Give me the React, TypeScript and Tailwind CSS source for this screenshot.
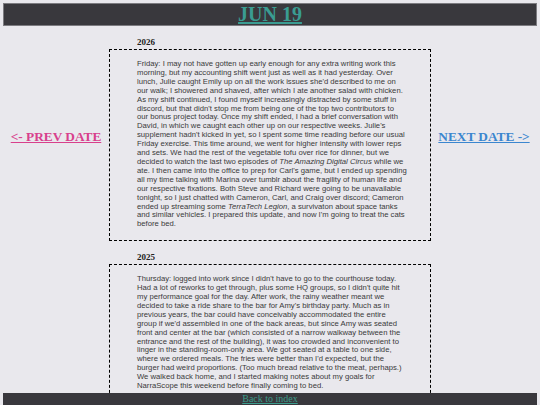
import React from "react";

type Entry = {
    year: string;
    body: React.ReactNode;
};

const entries: Entry[] = [
    {
        year: "2026",
        body: (
            <>
                Friday: I may not have gotten up early enough for any extra writing work this
                morning, but my accounting shift went just as well as it had yesterday. Over
                lunch, Julie caught Emily up on all the work issues she'd described to me on
                our walk; I showered and shaved, after which I ate another salad with chicken.
                As my shift continued, I found myself increasingly distracted by some stuff in
                discord, but that didn't stop me from being one of the top two contributors to
                our bonus project today. Once my shift ended, I had a brief conversation with
                David, in which we caught each other up on our respective weeks. Julie's
                supplement hadn't kicked in yet, so I spent some time reading before our usual
                Friday exercise. This time around, we went for higher intensity with lower reps
                and sets. We had the rest of the vegetable tofu over rice for dinner, but we
                decided to watch the last two episodes of <i>The Amazing Digital Circus</i> while we
                ate. I then came into the office to prep for Carl's game, but I ended up spending
                all my time talking with Marina over tumblr about the fragility of human life and
                our respective fixations. Both Steve and Richard were going to be unavailable
                tonight, so I just chatted with Cameron, Carl, and Craig over discord; Cameron
                ended up streaming some <i>TerraTech Legion</i>, a survivaton about space tanks
                and similar vehicles. I prepared this update, and now I'm going to treat the cats
                before bed.
            </>
        ),
    },
    {
        year: "2025",
        body: (
            <>
                Thursday: logged into work since I didn't have to go to the courthouse today.
                Had a lot of reworks to get through, plus some HQ groups, so I didn't quite hit
                my performance goal for the day. After work, the rainy weather meant we
                decided to take a ride share to the bar for Amy's birthday party. Much as in
                previous years, the bar could have conceivably accommodated the entire
                group if we'd assembled in one of the back areas, but since Amy was seated
                front and center at the bar (which consisted of a narrow walkway between the
                entrance and the rest of the building), it was too crowded and inconvenient to
                linger in the standing-room-only area. We got seated at a table to one side,
                where we ordered meals. The fries were better than I'd expected, but the
                burger had weird proportions. (Too much bread relative to the meat, perhaps.)
                We walked back home, and I started making notes about my goals for
                NarraScope this weekend before finally coming to bed.
            </>
        ),
    },
];

const serif = "font-['Liberation_Serif',_'Times_New_Roman',_serif]";

export default function App() {
    return (
        <div className="relative h-[405px] w-[540px] overflow-hidden bg-[#e9e8ed] p-[3px]">
            {/* Title bar */}
            <header className="flex h-[23px] items-start justify-center border border-[#7c7b80] bg-[#39383d]">
                <a
                    href="#"
                    className={`${serif} text-[20px] font-bold leading-[21px] text-[#3a9c92] underline`}
                >
                    JUN 19
                </a>
            </header>

            <div className="flex">
                {/* Prev */}
                <div className="flex w-[106px] justify-center pt-[103px]">
                    <a
                        href="#"
                        className={`${serif} h-fit text-[13.3px] font-bold leading-[15px] text-[#d8408c] underline`}
                    >
                        &lt;- PREV DATE
                    </a>
                </div>

                {/* Entries */}
                <main className="w-[322px]">
                    {entries.map((e) => (
                        <section key={e.year} className="mb-[11px] first:mt-[11px]">
                            <h3
                                className={`${serif} mb-[2px] pl-[28px] text-[9px] font-bold leading-[10px] text-[#222]`}
                            >
                                {e.year}
                            </h3>
                            <div className="border border-dashed border-black pb-[11px] pl-[27px] pr-[19px] pt-[10px]">
                                <p className="w-[270px] font-['Liberation_Sans',_Arial,_sans-serif] text-[7.7px] leading-[8.9px] text-[#3a3a3a]">
                                    {e.body}
                                </p>
                            </div>
                        </section>
                    ))}
                </main>

                {/* Next */}
                <div className="flex flex-1 justify-center pt-[103px]">
                    <a
                        href="#"
                        className={`${serif} h-fit text-[13.3px] font-bold leading-[15px] text-[#3b86cf] underline`}
                    >
                        NEXT DATE -&gt;
                    </a>
                </div>
            </div>

            {/* Footer */}
            <footer className="absolute bottom-0 left-[3px] right-[3px] flex h-[12px] justify-center bg-[#39383d]">
                <a
                    href="#"
                    className={`${serif} text-[10px] leading-[12px] text-[#3a9c8c] underline`}
                >
                    Back to index
                </a>
            </footer>
        </div>
    );
}
